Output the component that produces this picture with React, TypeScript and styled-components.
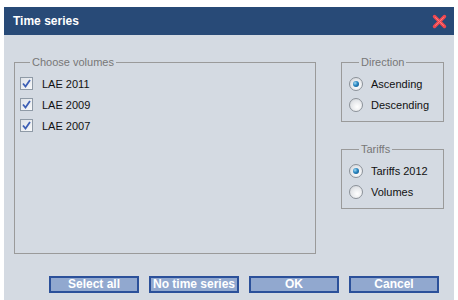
import styled, { createGlobalStyle } from "styled-components";

const GlobalStyle = createGlobalStyle`
  html, body {
    margin: 0;
    padding: 0;
    background: #ffffff;
    font-family: "Liberation Sans", Arial, sans-serif;
  }
`;

const Page = styled.div`
  padding: 7px 4px 0 4px;
  width: 450px;
`;

const Dialog = styled.div`
  width: 450px;
  height: 293px;
  display: flex;
  flex-direction: column;
  background: #d4dae2;
`;

const TitleBar = styled.div`
  height: 28px;
  background: #284a77;
  display: flex;
  align-items: center;
  justify-content: space-between;
  padding: 0 7px 0 9px;
  flex-shrink: 0;
`;

const Title = styled.span`
  color: #ffffff;
  font-size: 12px;
  font-weight: bold;
`;

const Body = styled.div`
  flex: 1;
  display: flex;
  flex-direction: column;
  padding: 21px 10px 7px 10px;
`;

const Content = styled.div`
  display: flex;
  justify-content: space-between;
  height: 198px;
`;

const Group = styled.fieldset<{ $width: number; $height: number; $indent: number }>`
  box-sizing: border-box;
  width: ${p => p.$width}px;
  height: ${p => p.$height}px;
  margin: 0;
  padding: 4px 0 0 ${p => p.$indent}px;
  border: 1px solid #9a9a9a;
  display: flex;
  flex-direction: column;
  min-width: 0;
`;

const Legend = styled.legend`
  margin-left: 10px;
  padding: 0 2px;
  font-size: 11px;
  color: #777777;
  line-height: 13px;
`;

const SideColumn = styled.div`
  display: flex;
  flex-direction: column;
  gap: 21px;
`;

const Row = styled.label<{ $gap: number }>`
  display: flex;
  align-items: center;
  height: 21px;
  font-size: 11px;
  color: #111;
  gap: ${p => p.$gap}px;
`;

const CheckBox = styled.span`
  box-sizing: border-box;
  width: 13px;
  height: 13px;
  border: 1px solid #8f9aa6;
  background: linear-gradient(135deg, #dfe3e8 0%, #f7f8fa 100%);
  display: flex;
  align-items: center;
  justify-content: center;
`;

const Radio = styled.span<{ $on?: boolean }>`
  box-sizing: border-box;
  width: 14px;
  height: 14px;
  border-radius: 50%;
  border: 1px solid #8c9299;
  background: radial-gradient(circle at 60% 65%, #ffffff 0%, #e6e8eb 55%, #c9cdd2 100%);
  display: flex;
  align-items: center;
  justify-content: center;
  &::after {
    content: "";
    display: ${p => (p.$on ? "block" : "none")};
    width: 6px;
    height: 6px;
    border-radius: 50%;
    background: radial-gradient(circle at 35% 35%, #9fd8f2 0%, #2a86c0 45%, #0d4a7c 100%);
  }
`;

const ButtonBar = styled.div`
  margin-top: auto;
  display: flex;
  justify-content: flex-end;
  gap: 10px;
  padding-right: 5px;
`;

const Button = styled.button`
  box-sizing: border-box;
  width: 90px;
  height: 17px;
  padding: 0;
  border: 2px solid #2b509a;
  background: #91a8cf;
  color: #ffffff;
  font-family: "Liberation Sans", Arial, sans-serif;
  font-size: 12px;
  font-weight: bold;
  line-height: 13px;
`;

const CloseIcon = () => (
  <svg width="15" height="15" viewBox="0 0 15 15">
    <path d="M2.5 2.5 L12.5 12.5 M12.5 2.5 L2.5 12.5" stroke="#f0484f" strokeWidth="3.4" strokeLinecap="round" />
    <path d="M3.5 3.5 L11.5 11.5 M11.5 3.5 L3.5 11.5" stroke="#ff7a7e" strokeWidth="1" strokeLinecap="round" />
  </svg>
);

const CheckMark = () => (
  <svg width="9" height="9" viewBox="0 0 9 9">
    <path d="M1 4.5 L3.5 7.5 L8 1" fill="none" stroke="#3d5fb5" strokeWidth="1.8" />
  </svg>
);

const volumes = ["LAE 2011", "LAE 2009", "LAE 2007"];

export default function App() {
  return (
    <Page>
      <GlobalStyle />
      <Dialog>
        <TitleBar>
          <Title>Time series</Title>
          <CloseIcon />
        </TitleBar>
        <Body>
          <Content>
            <Group $width={302} $height={198} $indent={5}>
              <Legend>Choose volumes</Legend>
              {volumes.map(v => (
                <Row key={v} $gap={9}>
                  <CheckBox>
                    <CheckMark />
                  </CheckBox>
                  {v}
                </Row>
              ))}
            </Group>
            <SideColumn>
              <Group $width={103} $height={66} $indent={7}>
                <Legend>Direction</Legend>
                <Row $gap={8}>
                  <Radio $on />
                  Ascending
                </Row>
                <Row $gap={8}>
                  <Radio />
                  Descending
                </Row>
              </Group>
              <Group $width={103} $height={66} $indent={7}>
                <Legend>Tariffs</Legend>
                <Row $gap={8}>
                  <Radio $on />
                  Tariffs 2012
                </Row>
                <Row $gap={8}>
                  <Radio />
                  Volumes
                </Row>
              </Group>
            </SideColumn>
          </Content>
          <ButtonBar>
            <Button>Select all</Button>
            <Button>No time series</Button>
            <Button>OK</Button>
            <Button>Cancel</Button>
          </ButtonBar>
        </Body>
      </Dialog>
    </Page>
  );
}
